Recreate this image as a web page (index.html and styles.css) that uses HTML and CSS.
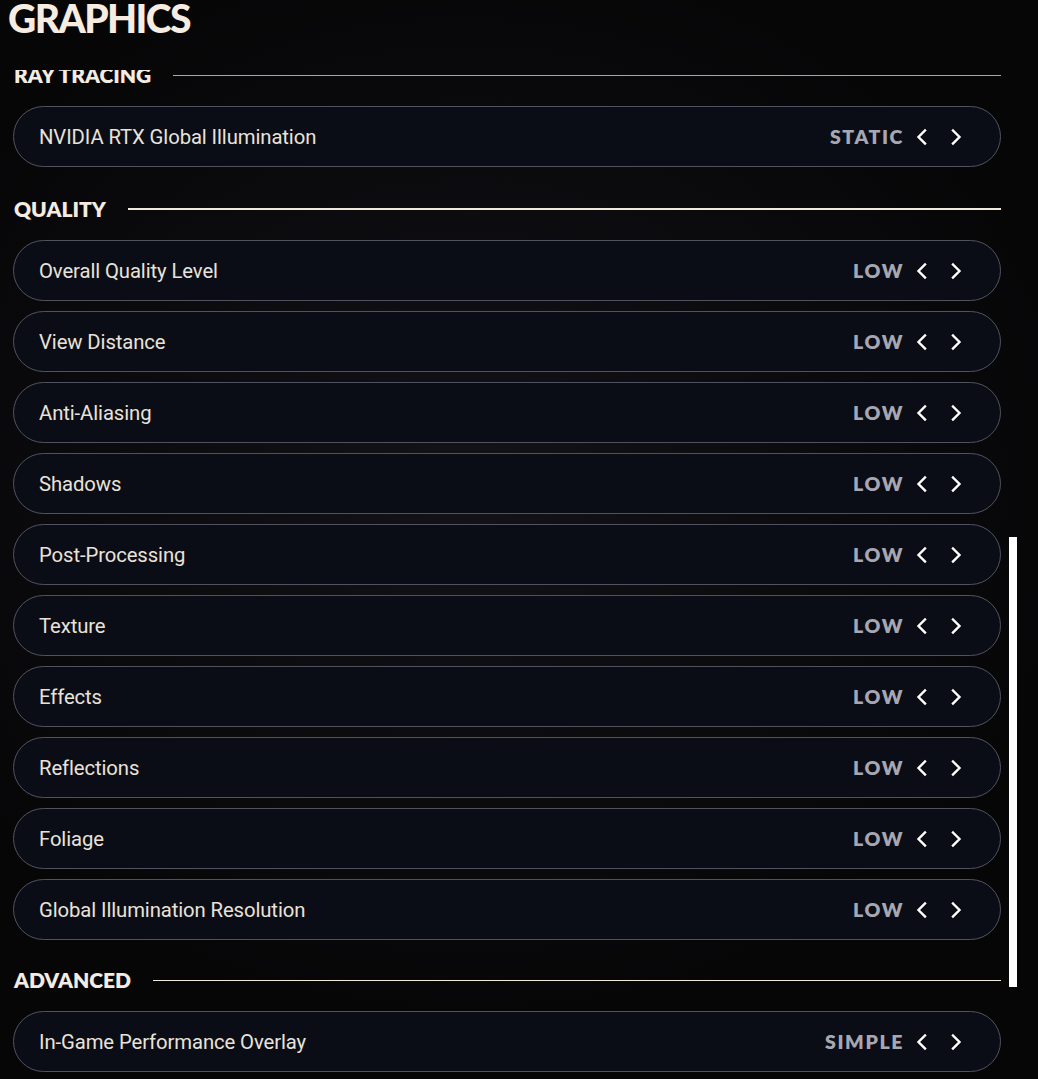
FILE: index.html
```html
<!DOCTYPE html>
<html>
<head>
<meta charset="utf-8">
<link rel="stylesheet" href="styles.css">
</head>
<body>
<div class="page">
  <header class="title-bar"><h1 class="title">GRAPHICS</h1></header>
  <div class="viewport">
    <div class="list">
      <div class="section section-first">
        <span class="section-name">RAY TRACING</span><span class="section-line line-dim"></span>
      </div>
      <div class="row"><span class="label">NVIDIA RTX Global Illumination</span><span class="value">STATIC</span><span class="arrow"><svg viewBox="0 0 20 20"><path d="M14 3.5 L7.5 10 L14 16.5"/></svg></span><span class="arrow"><svg viewBox="0 0 20 20"><path d="M6 3.5 L12.5 10 L6 16.5"/></svg></span></div>

      <div class="section">
        <span class="section-name">QUALITY</span><span class="section-line line-bold"></span>
      </div>
      <div class="rows">
        <div class="row"><span class="label">Overall Quality Level</span><span class="value">LOW</span><span class="arrow"><svg viewBox="0 0 20 20"><path d="M14 3.5 L7.5 10 L14 16.5"/></svg></span><span class="arrow"><svg viewBox="0 0 20 20"><path d="M6 3.5 L12.5 10 L6 16.5"/></svg></span></div>
        <div class="row"><span class="label">View Distance</span><span class="value">LOW</span><span class="arrow"><svg viewBox="0 0 20 20"><path d="M14 3.5 L7.5 10 L14 16.5"/></svg></span><span class="arrow"><svg viewBox="0 0 20 20"><path d="M6 3.5 L12.5 10 L6 16.5"/></svg></span></div>
        <div class="row"><span class="label">Anti-Aliasing</span><span class="value">LOW</span><span class="arrow"><svg viewBox="0 0 20 20"><path d="M14 3.5 L7.5 10 L14 16.5"/></svg></span><span class="arrow"><svg viewBox="0 0 20 20"><path d="M6 3.5 L12.5 10 L6 16.5"/></svg></span></div>
        <div class="row"><span class="label">Shadows</span><span class="value">LOW</span><span class="arrow"><svg viewBox="0 0 20 20"><path d="M14 3.5 L7.5 10 L14 16.5"/></svg></span><span class="arrow"><svg viewBox="0 0 20 20"><path d="M6 3.5 L12.5 10 L6 16.5"/></svg></span></div>
        <div class="row"><span class="label">Post-Processing</span><span class="value">LOW</span><span class="arrow"><svg viewBox="0 0 20 20"><path d="M14 3.5 L7.5 10 L14 16.5"/></svg></span><span class="arrow"><svg viewBox="0 0 20 20"><path d="M6 3.5 L12.5 10 L6 16.5"/></svg></span></div>
        <div class="row"><span class="label">Texture</span><span class="value">LOW</span><span class="arrow"><svg viewBox="0 0 20 20"><path d="M14 3.5 L7.5 10 L14 16.5"/></svg></span><span class="arrow"><svg viewBox="0 0 20 20"><path d="M6 3.5 L12.5 10 L6 16.5"/></svg></span></div>
        <div class="row"><span class="label">Effects</span><span class="value">LOW</span><span class="arrow"><svg viewBox="0 0 20 20"><path d="M14 3.5 L7.5 10 L14 16.5"/></svg></span><span class="arrow"><svg viewBox="0 0 20 20"><path d="M6 3.5 L12.5 10 L6 16.5"/></svg></span></div>
        <div class="row"><span class="label">Reflections</span><span class="value">LOW</span><span class="arrow"><svg viewBox="0 0 20 20"><path d="M14 3.5 L7.5 10 L14 16.5"/></svg></span><span class="arrow"><svg viewBox="0 0 20 20"><path d="M6 3.5 L12.5 10 L6 16.5"/></svg></span></div>
        <div class="row"><span class="label">Foliage</span><span class="value">LOW</span><span class="arrow"><svg viewBox="0 0 20 20"><path d="M14 3.5 L7.5 10 L14 16.5"/></svg></span><span class="arrow"><svg viewBox="0 0 20 20"><path d="M6 3.5 L12.5 10 L6 16.5"/></svg></span></div>
        <div class="row"><span class="label">Global Illumination Resolution</span><span class="value">LOW</span><span class="arrow"><svg viewBox="0 0 20 20"><path d="M14 3.5 L7.5 10 L14 16.5"/></svg></span><span class="arrow"><svg viewBox="0 0 20 20"><path d="M6 3.5 L12.5 10 L6 16.5"/></svg></span></div>
      </div>

      <div class="section section-advanced">
        <span class="section-name">ADVANCED</span><span class="section-line"></span>
      </div>
      <div class="row"><span class="label">In-Game Performance Overlay</span><span class="value">SIMPLE</span><span class="arrow"><svg viewBox="0 0 20 20"><path d="M14 3.5 L7.5 10 L14 16.5"/></svg></span><span class="arrow"><svg viewBox="0 0 20 20"><path d="M6 3.5 L12.5 10 L6 16.5"/></svg></span></div>
    </div>
    <div class="scrollbar"></div>
  </div>
</div>
</body>
</html>
```

FILE: styles.css
```css
html, body {
  margin: 0;
  padding: 0;
  height: 100%;
}
body {
  background: #08080a;
  overflow: hidden;
}
.page {
  height: 1079px;
  width: 1038px;
  display: flex;
  flex-direction: column;
  background: radial-gradient(ellipse 60% 50% at 45% 45%, #131318 0%, #0b0b0e 60%, #060607 100%);
}
.title-bar {
  height: 70px;
  flex: none;
  padding-left: 8px;
  box-sizing: border-box;
}
.title {
  margin: 0;
  font-family: "Lato", sans-serif;
  font-weight: 900;
  font-size: 39px;
  line-height: 36px;
  letter-spacing: -1.6px;
  color: #f6ece1;
}
.viewport {
  flex: 1;
  position: relative;
  overflow: hidden;
}
.list {
  margin-top: -5px;
  padding-left: 13px;
  width: 988px;
  display: flex;
  flex-direction: column;
}
.section {
  height: 20px;
  display: flex;
  align-items: center;
  gap: 22px;
  margin: 32px 0 21px;
  padding-left: 1px;
}
.section-first {
  margin-top: 0;
  margin-bottom: 21px;
}
.section-advanced {
  margin-top: 30px;
  margin-bottom: 21px;
}
.section-name {
  font-family: "Lato", sans-serif;
  font-weight: 800;
  font-size: 21px;
  letter-spacing: 0px;
  color: #f4ebe1;
  line-height: 20px;
}
.section-line {
  flex: 1;
  height: 1px;
  background: #f1e8de;
}
.line-bold {
  height: 2px;
}
.line-dim {
  background: #a9a7a6;
}
.rows {
  display: flex;
  flex-direction: column;
  gap: 10px;
}
.row {
  height: 61px;
  box-sizing: border-box;
  border: 1px solid #50535f;
  border-radius: 31px;
  background: #0b0d16;
  display: flex;
  align-items: center;
  padding: 0 33px 0 25px;
}
.label {
  flex: 1;
  font-family: "Roboto", sans-serif;
  font-size: 20.3px;
  color: #e9e2d9;
  letter-spacing: -0.1px;
}
.value {
  font-family: "Lato", sans-serif;
  font-weight: 800;
  font-size: 19.5px;
  letter-spacing: 1.6px;
  color: #a7a7b2;
  margin-right: 7px;
}
.arrow {
  width: 20px;
  height: 20px;
  display: flex;
}
.arrow + .arrow {
  margin-left: 16px;
}
.arrow svg {
  width: 20px;
  height: 20px;
  fill: none;
  stroke: #ffffff;
  stroke-width: 2.4;
  stroke-linecap: square;
}
.scrollbar {
  position: absolute;
  left: 1009px;
  top: 467px;
  width: 8px;
  height: 450px;
  background: #ffffff;
}
```
